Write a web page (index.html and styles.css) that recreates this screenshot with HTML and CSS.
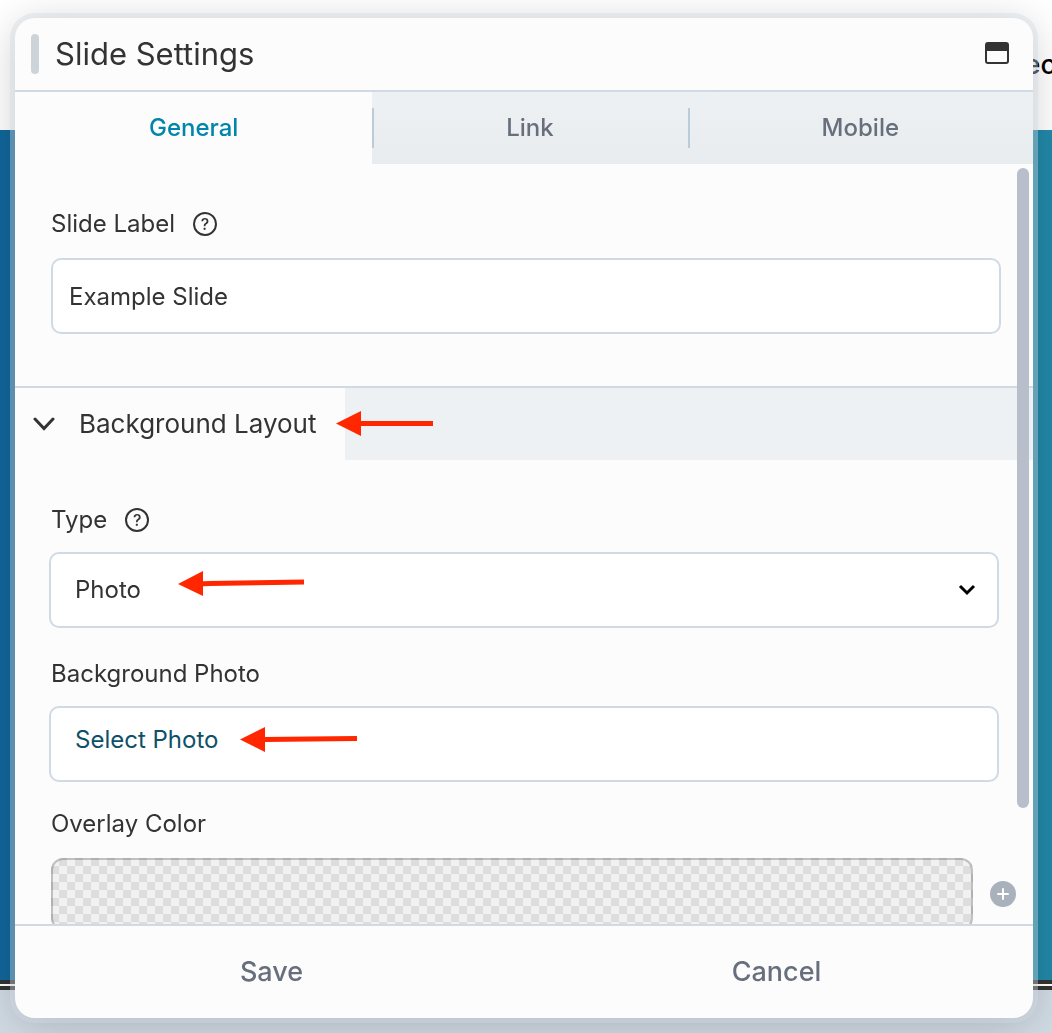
FILE: index.html
```
<!DOCTYPE html>
<html lang="en">
<head>
    <meta charset="UTF-8">
    <meta name="viewport" content="width=device-width, initial-scale=1.0">
    <title>Slide Settings</title>
    <link rel="stylesheet" href="styles.css">
</head>
<body>
    <div class="page">
        <header class="page-header"><span>ec</span></header>
        <div class="page-banner"></div>
        <div class="page-rule"></div>
        <div class="page-bottom"></div>
    </div>

    <form class="panel">
        <header class="panel-header">
            <span class="handle"></span>
            <h1>Slide Settings</h1>
            <button type="button" class="window-button" aria-label="Expand">
                <svg width="24" height="24" viewBox="0 0 24 24">
                    <rect x="1" y="1" width="22" height="20" rx="2" fill="none" stroke="#333" stroke-width="2"/>
                    <path d="M1 3a2 2 0 0 1 2-2h18a2 2 0 0 1 2 2v6H1z" fill="#333"/>
                </svg>
            </button>
        </header>

        <nav class="tabs">
            <button type="button" class="tab active">General</button>
            <button type="button" class="tab">Link</button>
            <button type="button" class="tab">Mobile</button>
        </nav>

        <div class="panel-body">
            <section class="label-section">
                <div class="label-row">
                    <label for="slide-label">Slide Label</label>
                    <button type="button" class="help" aria-label="Help">?</button>
                </div>
                <input type="text" id="slide-label" class="control" value="Example Slide">
            </section>

            <section class="layout-section">
                <div class="section-bar">
                    <h2 class="section-title">
                        <svg width="22" height="14" viewBox="0 0 22 14">
                            <path d="M2 2l9 9.500 9-9.500" fill="none" stroke="#333" stroke-width="3" stroke-linecap="round"/>
                        </svg>
                        Background Layout
                        <svg class="arrow" width="97" height="26" viewBox="0 0 97 26">
                            <path d="M0 12.500L25 0v25z" fill="#ff2600"/>
                            <path d="M24 12.500H97" stroke="#ff2600" stroke-width="5"/>
                        </svg>
                    </h2>
                </div>

                <div class="fields">
                    <div class="label-row">
                        <label for="type">Type</label>
                        <button type="button" class="help" aria-label="Help">?</button>
                    </div>
                    <div class="select-wrap">
                        <select id="type" class="control">
                            <option>Photo</option>
                        </select>
                        <svg class="chevron" width="18" height="12" viewBox="0 0 18 12">
                            <path d="M2 2l7 7 7-7" fill="none" stroke="#000" stroke-width="3"/>
                        </svg>
                        <svg class="arrow arrow-type" width="126" height="26" viewBox="0 0 126 26">
                            <path d="M0 13L25 0v25z" fill="#ff2600"/>
                            <path d="M24 12.700L126 11" stroke="#ff2600" stroke-width="5"/>
                        </svg>
                    </div>

                    <div class="label-row">
                        <span>Background Photo</span>
                    </div>
                    <div class="control photo-box">
                        <a href="#">Select Photo</a>
                        <svg class="arrow arrow-photo" width="117" height="26" viewBox="0 0 117 26">
                            <path d="M0 12.500L25 0v25z" fill="#ff2600"/>
                            <path d="M24 12.500L117 11.500" stroke="#ff2600" stroke-width="5"/>
                        </svg>
                    </div>

                    <div class="label-row">
                        <span id="overlay-label">Overlay Color</span>
                    </div>
                    <div class="color-row">
                        <button type="button" class="swatch" aria-labelledby="overlay-label"></button>
                        <button type="button" class="add" aria-label="Add color">
                            <svg width="26" height="26" viewBox="0 0 26 26">
                                <circle cx="13" cy="13" r="13" fill="#a9b1bc"/>
                                <path d="M13 8v10M8 13h10" stroke="#fff" stroke-width="2" stroke-linecap="round"/>
                            </svg>
                        </button>
                    </div>
                </div>
            </section>
            <div class="scrollbar"></div>
        </div>

        <footer class="panel-footer">
            <button type="submit">Save</button>
            <button type="button">Cancel</button>
        </footer>
    </form>
</body>
</html>
```
FILE: styles.css
```
* {
    box-sizing: border-box;
}
body {
    margin: 0;
    font-family: Inter, "Liberation Sans", sans-serif;
    font-size: 24px;
    line-height: 32px;
    color: #333;
    overflow: hidden;
}
h1, h2 {
    margin: 0;
    font-weight: 400;
}
button {
    padding: 0;
    border: none;
    background: none;
    font: inherit;
    color: inherit;
    cursor: pointer;
}
svg {
    display: block;
}

/* Page behind the panel */
.page {
    display: flex;
    flex-direction: column;
    height: 100vh;
}
.page-header {
    display: flex;
    align-items: center;
    justify-content: flex-end;
    height: 130px;
    overflow: hidden;
    background: #fff;
    color: #000;
    font-size: 27px;
    font-weight: 500;
}
.page-header span {
    margin-right: -4px;
}
.page-banner {
    flex: 1;
    background: linear-gradient(90deg, #11669b, #2288a8);
}
.page-rule {
    height: 10px;
    border: solid #333;
    border-width: 4px 0;
    background: #fff;
}
.page-bottom {
    height: 43px;
    background: #d0dae3;
}

/* Panel */
.panel {
    position: fixed;
    top: 18px;
    right: 19px;
    bottom: 15px;
    left: 15px;
    display: flex;
    flex-direction: column;
    overflow: hidden;
    border-radius: 20px;
    background: #fcfcfc;
    box-shadow: 0 0 0 5px rgba(208, 218, 225, 0.4), 0 5px 40px rgba(0, 0, 0, 0.2);
}
.panel-header {
    display: flex;
    align-items: center;
    gap: 16px;
    height: 74px;
    padding: 0 24px 0 16px;
    border-bottom: 2px solid #d0dae5;
}
.panel-header h1 {
    flex: 1;
    font-size: 31px;
}
.handle {
    width: 8px;
    height: 40px;
    border-radius: 4px;
    background: #ccd4da;
}

.tabs {
    display: flex;
    height: 72px;
}
.tab {
    position: relative;
    flex: 1 1 auto;
    background: linear-gradient(#edf1f4, #e8ecef);
    color: #676f7c;
    font-weight: 500;
}
.tab.active {
    background: none;
    color: #0085ad;
}
.tab:not(.active)::before {
    content: "";
    position: absolute;
    top: 16px;
    left: 0;
    width: 2px;
    height: 40px;
    background: #bacbd9;
}

.panel-body {
    position: relative;
    flex: 1;
    min-height: 0;
    overflow: hidden;
}
.scrollbar {
    position: absolute;
    top: 4px;
    right: 4px;
    width: 12px;
    height: 640px;
    border-radius: 6px;
    background: #b8bfcb;
}
.label-section {
    padding: 44px 32px 52px 36px;
}
.label-row {
    display: flex;
    align-items: center;
    gap: 18px;
    height: 32px;
}
.help {
    width: 24px;
    height: 24px;
    border: 2px solid #333;
    border-radius: 50%;
    font-size: 16px;
    font-weight: 500;
    line-height: 20px;
}
.control {
    display: block;
    width: 100%;
    height: 76px;
    border: 2px solid #d0dae5;
    border-radius: 10px;
    background: #fff;
    color: #333;
    font: inherit;
}
#slide-label {
    margin-top: 18px;
    padding: 0 16px;
}

.section-bar {
    display: flex;
    border-top: 2px solid #d0dae5;
    background: #edf1f4;
}
.section-title {
    position: relative;
    display: flex;
    align-items: center;
    gap: 24px;
    height: 72px;
    padding: 0 28px 0 18px;
    background: #fcfcfc;
    font-size: 26px;
}
.arrow {
    position: absolute;
    top: 23px;
    left: 321px;
}
.fields {
    padding: 44px 34px 0;
}
.fields .label-row {
    padding-left: 2px;
}
.select-wrap {
    position: relative;
    margin: 16px 0 30px;
}
select.control {
    appearance: none;
    padding: 0 24px;
}
.chevron {
    position: absolute;
    top: 32px;
    right: 23px;
    pointer-events: none;
}
.arrow-type {
    top: 19px;
    left: 129px;
}
.photo-box {
    position: relative;
    margin: 16px 0 26px;
    padding: 16px 24px;
}
.photo-box a {
    color: #0e5069;
    text-decoration: none;
}
.arrow-photo {
    top: 19px;
    left: 189px;
}
.color-row {
    display: flex;
    align-items: center;
    gap: 17px;
    margin: 18px -17px 0 2px;
}
.swatch {
    flex: 1;
    height: 72px;
    border: 2px solid rgba(0, 0, 0, 0.2);
    border-radius: 12px;
    background: conic-gradient(#ddd 25%, #f1f1f1 0 50%, #ddd 0 75%, #f1f1f1 0) border-box;
    background-size: 16px 16px;
}

.panel-footer {
    display: flex;
    height: 94px;
    padding: 0 4px;
    border-top: 2px solid #d0dae5;
}
.panel-footer button {
    flex: 1;
    color: #676f7c;
    font-size: 27px;
    font-weight: 500;
}
```
